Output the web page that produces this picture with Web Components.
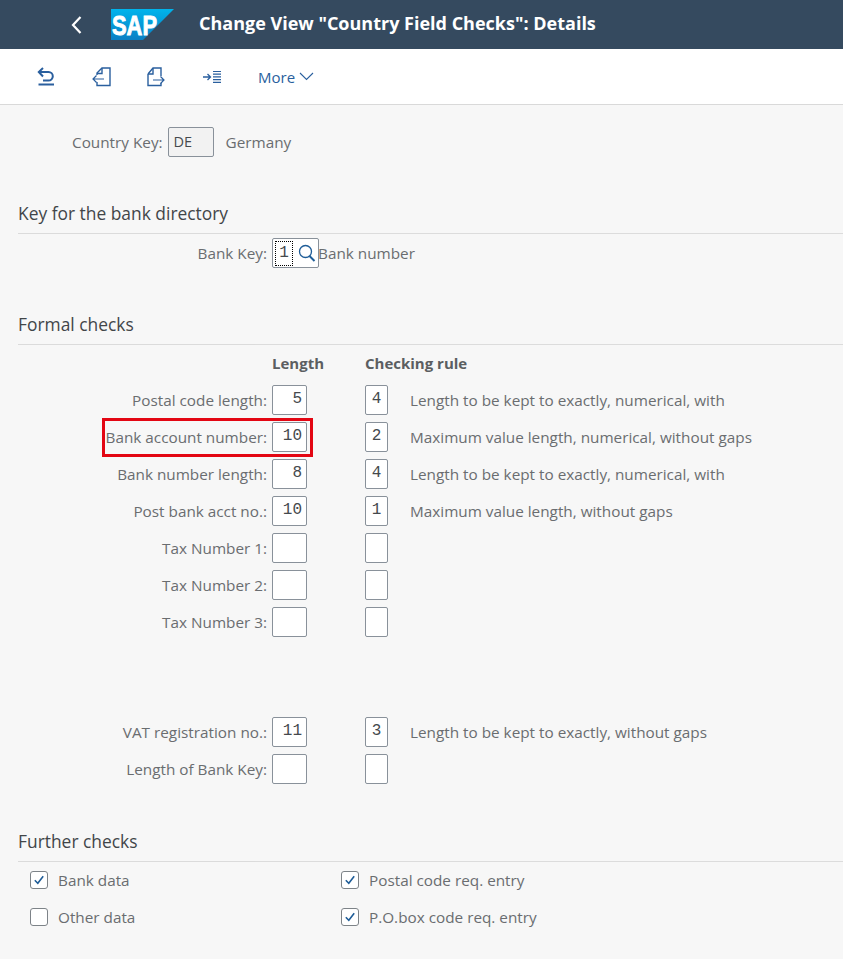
<!DOCTYPE html>
<html>
    <head>
        <meta charset="utf-8" />
        <title>Change View "Country Field Checks": Details</title>
        <style>
            html, body {
                margin: 0;
                height: 959px;
                overflow: hidden;
                background: #f7f7f7;
                font-family: "Open Sans", "Noto Sans", sans-serif;
                font-size: 15.3px;
                color: #6a6d70;
            }

            .page {
                display: block;
                padding-left: 18px;
            }
        </style>
    </head>
    <body>
        <sap-shell-bar title='Change View "Country Field Checks": Details'></sap-shell-bar>
        <sap-toolbar></sap-toolbar>

        <div class="page">
            <sap-key-row style="margin-top: 22px"></sap-key-row>

            <sap-group title="Key for the bank directory" style="margin-top: 44px"></sap-group>
            <sap-bank-row></sap-bank-row>

            <sap-group title="Formal checks" style="margin-top: 44px"></sap-group>
            <sap-check-head></sap-check-head>
            <sap-check-row label="Postal code length:" len="5" rule="4" text="Length to be kept to exactly, numerical, with"></sap-check-row>
            <sap-check-row label="Bank account number:" len="10" rule="2" text="Maximum value length, numerical, without gaps" marked></sap-check-row>
            <sap-check-row label="Bank number length:" len="8" rule="4" text="Length to be kept to exactly, numerical, with"></sap-check-row>
            <sap-check-row label="Post bank acct no.:" len="10" rule="1" text="Maximum value length, without gaps"></sap-check-row>
            <sap-check-row label="Tax Number 1:"></sap-check-row>
            <sap-check-row label="Tax Number 2:"></sap-check-row>
            <sap-check-row label="Tax Number 3:"></sap-check-row>
            <sap-check-row style="margin-top: 80px" label="VAT registration no.:" len="11" rule="3" text="Length to be kept to exactly, without gaps"></sap-check-row>
            <sap-check-row label="Length of Bank Key:"></sap-check-row>

            <sap-group title="Further checks" style="margin-top: 45px"></sap-group>
            <sap-option-row style="margin-top: 8px" first="Bank data" first-on second="Postal code req. entry" second-on></sap-option-row>
            <sap-option-row first="Other data" second="P.O.box code req. entry" second-on></sap-option-row>
        </div>

        <template id="shell-bar">
            <style>
                :host {
                    display: flex;
                    align-items: center;
                    height: 49px;
                    background: #354a5f;
                    color: #fff;
                }

                .back {
                    width: 11px;
                    height: 18px;
                    margin-left: 71px;
                }

                .logo {
                    width: 63px;
                    height: 31px;
                    margin-left: 29px;
                }

                .title {
                    margin-left: 25px;
                    padding-bottom: 4px;
                    font-size: 18px;
                    font-weight: 700;
                    white-space: nowrap;
                }
            </style>
            <svg class="back" viewBox="0 0 11 18" fill="none" stroke="#fff" stroke-width="2.2">
                <path d="M9.5 1 2 9l7.500 8" />
            </svg>
            <svg class="logo" viewBox="0 0 63 31">
                <defs>
                    <linearGradient id="sap-blue" x1="0" y1="0" x2="0" y2="1">
                        <stop offset="0" stop-color="#00b4ec" />
                        <stop offset="1" stop-color="#0a7fc4" />
                    </linearGradient>
                </defs>
                <path d="M0 0H63L32 31H0Z" fill="url(#sap-blue)" />
                <text x="1" y="25.500" font-family="Liberation Sans" font-weight="700" font-size="27" textLength="45" lengthAdjust="spacingAndGlyphs" fill="#fff" stroke="#fff" stroke-width="0.9">SAP</text>
            </svg>
            <span class="title"></span>
        </template>

        <template id="toolbar">
            <style>
                :host {
                    display: flex;
                    align-items: center;
                    height: 55px;
                    background: #fff;
                    border-bottom: 1px solid #d9d9d9;
                    color: #2a5f9e;
                }

                svg {
                    flex: none;
                    fill: none;
                    stroke: currentColor;
                    stroke-width: 1.400;
                }

                .undo { width: 18px; height: 20px; margin-left: 37px; }
                .prev { width: 20px; height: 20px; margin-left: 36px; }
                .next { width: 20px; height: 20px; margin-left: 35px; }
                .indent { width: 20px; height: 14px; margin-left: 36px; }

                .more {
                    margin-left: 36px;
                    font-size: 15px;
                }

                .chev { width: 15px; height: 9px; margin-left: 4px; stroke-width: 1.100; }
            </style>
            <svg class="undo" viewBox="0 0 18 20">
                <path stroke-width="2" d="M6 1 1.800 5 6 9.500M2 5h9.500a4.300 4.300 0 0 1 0 8.600H6M1.500 17.600H17" />
            </svg>
            <svg class="prev" viewBox="0 0 20 20">
                <path d="M6 8V6l5-5h8v17.500H6V15" />
                <path d="M6 6.500h5V1" />
                <path stroke-width="1.200" d="M13 12H2M5.500 8.500 2 12l3.500 3.500" />
            </svg>
            <svg class="next" viewBox="0 0 20 20">
                <path d="M2 7l5-6h8v8M15 16v2.500H2V7" />
                <path d="M2 7h5V1" />
                <path stroke-width="1.200" d="M7 13h11M14.500 9.500 18 13l-3.500 3.500" />
            </svg>
            <svg class="indent" viewBox="0 0 20 14">
                <path stroke-width="1.300" d="M1 7h7M5.500 4 8.500 7l-3 3" />
                <path stroke-width="1.200" d="M11 1.500h8M11 4.200h8M11 6.900h8M11 9.600h8M11 12.300h8" />
            </svg>
            <span class="more">More</span>
            <svg class="chev" viewBox="0 0 15 9">
                <path d="M1 1l6.500 6.500L14 1" />
            </svg>
        </template>

        <template id="group">
            <style>
                :host {
                    display: block;
                    height: 32px;
                    border-bottom: 1px solid #d9d9d9;
                    color: #32363a;
                    font-size: 17.400px;
                    line-height: 25px;
                    opacity: 0.92;
                }
            </style>
            <span class="text"></span>
        </template>

        <template id="field">
            <style>
                :host {
                    display: block;
                    box-sizing: border-box;
                    height: 30px;
                    padding: 0 4px 0 0;
                    border: 1px solid #89919a;
                    border-radius: 2px;
                    background: #fff;
                    color: #45494d;
                    font-family: "Liberation Mono", monospace;
                    font-size: 16px;
                    line-height: 27px;
                    text-align: right;
                }

                :host([center]) {
                    padding: 0;
                    text-align: center;
                }
            </style>
            <slot></slot>
        </template>

        <template id="key-row">
            <style>
                :host {
                    display: flex;
                    align-items: center;
                    height: 30px;
                    padding-left: 54px;
                }

                .value {
                    box-sizing: border-box;
                    width: 46px;
                    height: 30px;
                    margin: 0 12px 0 5px;
                    padding-left: 5px;
                    border: 1px solid #89919a;
                    border-radius: 2px;
                    background: #f2f2f2;
                    color: #45494d;
                    font-size: 14.500px;
                    line-height: 27px;
                }
            </style>
            <span>Country Key:</span>
            <span class="value">DE</span>
            <span>Germany</span>
        </template>

        <template id="bank-row">
            <style>
                :host {
                    display: grid;
                    grid-template-columns: 254px auto 1fr;
                    align-items: center;
                    height: 30px;
                    margin-top: 4px;
                }

                .label {
                    padding-right: 5px;
                    text-align: right;
                }

                .value {
                    display: flex;
                    align-items: center;
                    box-sizing: border-box;
                    width: 47px;
                    height: 30px;
                    padding-left: 2px;
                    border: 1px solid #89919a;
                    border-radius: 2px;
                    background: #fff;
                }

                .focus {
                    box-sizing: border-box;
                    width: 18px;
                    height: 25px;
                    outline: 1px dotted #000;
                    outline-offset: -1px;
                    color: #45494d;
                    font-family: "Liberation Mono", monospace;
                    font-size: 16px;
                    line-height: 25px;
                    text-align: center;
                }

                svg {
                    width: 18px;
                    height: 18px;
                    margin-left: 5px;
                    fill: none;
                    stroke: #1f5d98;
                }

                .text {
                    margin-left: -1px;
                }
            </style>
            <span class="label">Bank Key:</span>
            <span class="value">
                <span class="focus">1</span>
                <svg viewBox="0 0 18 18">
                    <circle cx="7.500" cy="7.500" r="6" stroke-width="1.300" />
                    <path stroke-width="2" d="M11.500 12l5 5" />
                </svg>
            </span>
            <span class="text">Bank number</span>
        </template>

        <template id="check-head">
            <style>
                :host {
                    display: grid;
                    grid-template-columns: 254px 93px 1fr;
                    height: 23px;
                    margin: 7px 0 10px;
                    color: #5b5e61;
                    font-weight: 700;
                    font-size: 15px;
                    line-height: 23px;
                }

                .len {
                    grid-column: 2;
                }
            </style>
            <span class="len">Length</span>
            <span>Checking rule</span>
        </template>

        <template id="check-row">
            <style>
                :host {
                    display: grid;
                    grid-template-columns: 254px 93px 45px 1fr;
                    align-items: center;
                    position: relative;
                    height: 30px;
                    margin-bottom: 7px;
                }

                .label {
                    padding-right: 5px;
                    text-align: right;
                }

                .len {
                    width: 35px;
                }

                .rule {
                    width: 23px;
                }

                .mark {
                    display: none;
                    position: absolute;
                    left: 84px;
                    top: -4px;
                    width: 211px;
                    height: 39px;
                    box-sizing: border-box;
                    border: 3px solid #e30613;
                }

                :host([marked]) .mark {
                    display: block;
                }
            </style>
            <span class="label"></span>
            <sap-field class="len"></sap-field>
            <sap-field class="rule" center></sap-field>
            <span class="text"></span>
            <span class="mark"></span>
        </template>

        <template id="option-row">
            <style>
                :host {
                    display: grid;
                    grid-template-columns: 311px 1fr;
                    align-items: center;
                    height: 19px;
                    margin-bottom: 18px;
                    padding-left: 12px;
                }
            </style>
            <sap-check class="a"></sap-check>
            <sap-check class="b"></sap-check>
        </template>

        <template id="check">
            <style>
                :host {
                    display: flex;
                    align-items: center;
                    gap: 10px;
                }

                .box {
                    box-sizing: border-box;
                    width: 18px;
                    height: 18px;
                    border: 1px solid #7d8388;
                    border-radius: 3px;
                    background: #fff;
                }

                svg {
                    display: none;
                    width: 16px;
                    height: 16px;
                    fill: none;
                    stroke: #1f5d98;
                    stroke-width: 1.600;
                }

                :host([on]) svg {
                    display: block;
                }
            </style>
            <span class="box">
                <svg viewBox="0 0 16 16"><path d="M3.800 8.300 6.800 11.300 12.200 4.300" /></svg>
            </span>
            <span><slot></slot></span>
        </template>

        <script>
            // 把模板内容放进 shadow root
            const mount = (el, id) =>
                el
                    .attachShadow({ mode: 'open' })
                    .appendChild(
                        document.querySelector(id).content.cloneNode(true)
                    )

            const plain = (name, id) =>
                customElements.define(
                    name,
                    class extends HTMLElement {
                        constructor() {
                            super()
                            mount(this, id)
                        }
                    }
                )

            plain('sap-toolbar', '#toolbar')
            plain('sap-field', '#field')
            plain('sap-key-row', '#key-row')
            plain('sap-bank-row', '#bank-row')
            plain('sap-check-head', '#check-head')
            plain('sap-check', '#check')

            customElements.define(
                'sap-shell-bar',
                class extends HTMLElement {
                    constructor() {
                        super()
                        mount(this, '#shell-bar')
                    }

                    connectedCallback() {
                        this.shadowRoot.querySelector('.title').textContent =
                            this.getAttribute('title')
                    }
                }
            )

            customElements.define(
                'sap-group',
                class extends HTMLElement {
                    constructor() {
                        super()
                        mount(this, '#group')
                    }

                    connectedCallback() {
                        this.shadowRoot.querySelector('.text').textContent =
                            this.getAttribute('title')
                    }
                }
            )

            customElements.define(
                'sap-check-row',
                class extends HTMLElement {
                    constructor() {
                        super()
                        mount(this, '#check-row')
                    }

                    connectedCallback() {
                        const root = this.shadowRoot
                        root.querySelector('.label').textContent =
                            this.getAttribute('label')
                        root.querySelector('.len').textContent =
                            this.getAttribute('len') || ''
                        root.querySelector('.rule').textContent =
                            this.getAttribute('rule') || ''
                        root.querySelector('.text').textContent =
                            this.getAttribute('text') || ''
                    }
                }
            )

            customElements.define(
                'sap-option-row',
                class extends HTMLElement {
                    constructor() {
                        super()
                        mount(this, '#option-row')
                    }

                    connectedCallback() {
                        const sync = (sel, key) => {
                            const box = this.shadowRoot.querySelector(sel)
                            box.textContent = this.getAttribute(key)
                            box.toggleAttribute('on', this.hasAttribute(key + '-on'))
                        }
                        sync('.a', 'first')
                        sync('.b', 'second')
                    }
                }
            )
        </script>
    </body>
</html>
